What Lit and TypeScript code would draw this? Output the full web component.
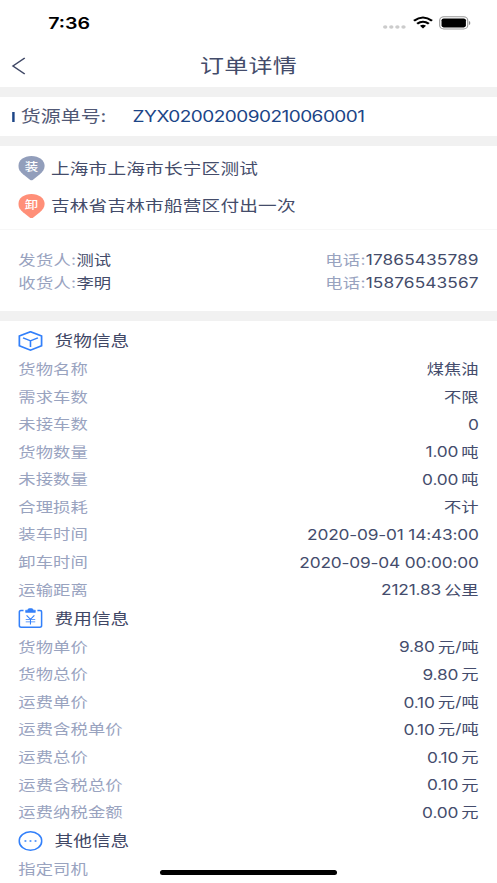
import { LitElement, html, css, svg } from "lit";
import { customElement, property } from "lit/decorators.js";

type Row = [label: string, value: string, unit?: string];

const CARGO: Row[] = [
  ["货物名称", "", "煤焦油"],
  ["需求车数", "", "不限"],
  ["未接车数", "0"],
  ["货物数量", "1.00", "吨"],
  ["未接数量", "0.00", "吨"],
  ["合理损耗", "", "不计"],
  ["装车时间", "2020-09-01 14:43:00"],
  ["卸车时间", "2020-09-04 00:00:00"],
  ["运输距离", "2121.83", "公里"],
];

const FEES: Row[] = [
  ["货物单价", "9.80", "元/吨"],
  ["货物总价", "9.80", "元"],
  ["运费单价", "0.10", "元/吨"],
  ["运费含税单价", "0.10", "元/吨"],
  ["运费总价", "0.10", "元"],
  ["运费含税总价", "0.10", "元"],
  ["运费纳税金额", "0.00", "元"],
];

const OTHER: Row[] = [["指定司机", ""]];

const ICONS = {
  box: svg`<path d="M10 .7 19.2 5V14.8L10 19.1 .8 14.8V5Z" stroke-width="1.6"/><path d="M3.9 6.9 10 9.9l6.1-3M10 9.9v6.2" stroke-width="1.3"/>`,
  bill: svg`<path d="M4.3 2.5H2.2Q.8 2.5.8 4v13.6Q.8 19.3 2.4 19.3h15.2q1.6 0 1.6-1.7V4q0-1.5-1.4-1.5h-2.1" stroke-width="1.4"/><path d="M6 4.4V2.2h1.6Q8 .5 9 .5h2q1 0 1.4 1.7H14v2.2Z" fill="#3380fa" stroke-width=".5"/><path d="m6.8 7.4 3.2 3.8 3.2-3.8M6.1 11.4h7.8M6.1 13.9h7.8M10 11.2v5.4" stroke-width=".9"/>`,
  more: svg`<ellipse cx="10" cy="10" rx="9.3" ry="9.3" stroke-width="1.4"/><path d="M5.1 10h1.5M9.25 10h1.5M13.4 10h1.5" stroke-width="1.4"/>`,
};

@customElement("info-section")
export class InfoSection extends LitElement {
  @property() heading = "";
  @property() icon: keyof typeof ICONS = "box";
  @property({ attribute: false }) rows: Row[] = [];

  static styles = css`
    :host { display: block; }
    .heading { display: flex; align-items: center; height: 29.5px; gap: 9.8px; font-size: 15.3px; color: #3f4765; }
    .icon { width: 20px; height: 20px; fill: none; stroke: #3380fa; }
    .row { display: flex; align-items: center; justify-content: space-between; height: 27.58px; white-space: pre; }
    .label { color: #99a3bf; letter-spacing: 0.1px; }
    .value { display: flex; align-items: center; gap: 2.6px; color: #444c6c; }
    .num { letter-spacing: -0.15px; padding-top: 1.4px; }
  `;

  render() {
    return html`
      <div class="heading">
        <svg class="icon" viewBox="0 0 20 20">${ICONS[this.icon]}</svg>
        <span>${this.heading}</span>
      </div>
      ${this.rows.map(
        ([label, value, unit]) => html`<div class="row">
          <span class="label">${label}</span>
          <span class="value">${value ? html`<span class="num">${value}</span>` : ""}${unit ? html`<span>${unit}</span>` : ""}</span>
        </div>`,
      )}
    `;
  }
}

@customElement("app-root")
export class AppRoot extends LitElement {
  static styles = css`
    :host { display: block; width: 497px; height: 883px; overflow: hidden; position: relative; background: #fff; }
    /* The screen is laid out narrow and widened to fill the window. */
    .screen {
      width: 407.7px; height: 883px; transform: scaleX(1.219); transform-origin: 0 0;
      display: flex; flex-direction: column;
      font: 400 14.2px/1 Inter, "Noto Sans CJK SC", sans-serif; color: #444c6a; overflow: hidden; white-space: nowrap;
    }
    .screen > * { flex: none; box-sizing: border-box; }
    .status { height: 44px; padding: 1px 21.5px 0 39.5px; display: flex; align-items: center; justify-content: space-between; }
    .time { font-size: 16.1px; font-weight: 600; color: #000; padding-top: 1px; }
    .signals { width: 72px; height: 14px; }
    .nav { height: 43px; padding: 0 9px; display: grid; grid-template-columns: 20px 1fr 20px; align-items: center; }
    .back { width: 13px; height: 18px; fill: none; stroke: #3f4765; stroke-width: 1.3; }
    .title { text-align: center; font-size: 19.7px; letter-spacing: .2px; padding-top: 2px; }
    .band { height: 10px; background: #f1f1f1; }
    .order { height: 39px; padding: 0 9.8px; display: flex; align-items: center; }
    .mark { width: 2px; height: 10px; background: #1c4587; margin-right: 5.2px; }
    .order-label { font-size: 16.4px; width: 91.8px; color: #515875; }
    .order-no { font-size: 15.6px; letter-spacing: -.43px; color: #1c4587; padding-top: 1px; }
    .route { height: 84px; padding: 4px 15px 0; border-bottom: 1px solid #f7f7f7; }
    .stop { height: 37.4px; display: flex; align-items: center; gap: 5.2px; font-size: 15.3px; letter-spacing: .15px; }
    .pin { width: 21.6px; height: 24.5px; flex: none; }
    .pin-text { font-size: 11px; fill: #fff; font-weight: 500; text-anchor: middle; letter-spacing: 0; }
    .people { height: 81px; padding: 18.5px 15px 0; }
    .person { height: 23px; display: flex; align-items: center; justify-content: space-between; letter-spacing: .08px; }
    .key { color: #99a3bf; letter-spacing: .25px; }
    .sections { padding: 4.8px 15px 0; }
    .home { position: absolute; left: 160px; top: 869.5px; width: 177px; height: 5px; border-radius: 3px; background: #000; }
  `;

  private pin(text: string, color: string) {
    return html`<svg class="pin" viewBox="0 0 21.6 24.5">
      <path fill=${color} d="M10.8 0C4.7 0 0 4.2 0 10c0 3.2 1.4 5.7 3.9 8.2l5.9 5.7q1 .8 2 0l5.9-5.7c2.5-2.5 3.9-5 3.9-8.2C21.6 4.2 16.9 0 10.8 0Z" />
      <text class="pin-text" x="10.8" y="15.3">${text}</text>
    </svg>`;
  }

  private person(role: string, name: string, phone: string) {
    return html`<div class="person">
      <span><span class="key">${role}:</span><span>${name}</span></span>
      <span><span class="key">电话:</span><span>${phone}</span></span>
    </div>`;
  }

  render() {
    return html`
      <div class="screen">
        <div class="status">
          <span class="time">7:36</span>
          <svg class="signals" viewBox="0 0 72 14">
            <g fill="#ccc"><circle cx="2" cy="11" r="1.8"/><circle cx="7" cy="11" r="1.8"/><circle cx="12" cy="11" r="1.8"/><circle cx="17" cy="11" r="1.8"/></g>
            <g fill="none" stroke="#000" stroke-width="2.1"><path d="M25.6 4.8q7.4-6.6 14.8 0M28.2 7.8q4.8-4.1 9.6 0"/></g>
            <path d="M30.5 9.8q2.5-2 5 0L33 12.4Z"/>
            <rect x="46.7" y=".8" width="23" height="12.2" rx="3.4" fill="none" stroke="#999" stroke-width=".9"/>
            <rect x="48.2" y="2.4" width="20" height="9" rx="1.8"/>
            <path d="M70.7 5q1.3.4 1.3 2t-1.3 2Z" fill="#888"/>
          </svg>
        </div>
        <div class="nav">
          <svg class="back" viewBox="0 0 13 18"><path d="M11.3 1 1.6 9l9.7 8"/></svg>
          <span class="title">订单详情</span>
        </div>
        <div class="band"></div>
        <div class="order">
          <span class="mark"></span>
          <span class="order-label">货源单号:</span>
          <span class="order-no">ZYX020020090210060001</span>
        </div>
        <div class="band"></div>
        <div class="route">
          <div class="stop">${this.pin("装", "#929ebb")}<span>上海市上海市长宁区测试</span></div>
          <div class="stop">${this.pin("卸", "#ff8f78")}<span>吉林省吉林市船营区付出一次</span></div>
        </div>
        <div class="people">
          ${this.person("发货人", "测试", "17865435789")}
          ${this.person("收货人", "李明", "15876543567")}
        </div>
        <div class="band"></div>
        <div class="sections">
          <info-section heading="货物信息" icon="box" .rows=${CARGO}></info-section>
          <info-section heading="费用信息" icon="bill" .rows=${FEES}></info-section>
          <info-section heading="其他信息" icon="more" .rows=${OTHER}></info-section>
        </div>
      </div>
      <div class="home"></div>
    `;
  }
}
